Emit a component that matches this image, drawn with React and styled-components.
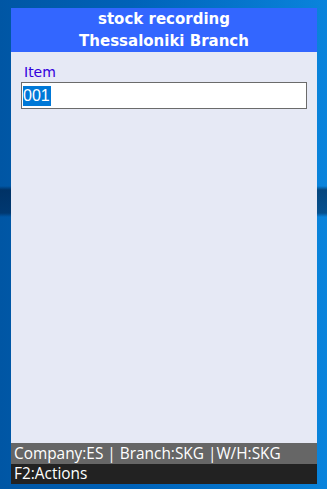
import React from "react";
import styled, { createGlobalStyle } from "styled-components";

const Global = createGlobalStyle`
  html, body { margin: 0; padding: 0; }
  body {
    width: 327px;
    height: 489px;
    overflow: hidden;
    background:
      linear-gradient(to bottom, transparent 186px, rgba(0, 20, 50, 0.55) 190px, rgba(0, 20, 50, 0.45) 213px, transparent 217px),
      linear-gradient(to right, #0056a4 0%, #0062b8 40%, #0a84dc 100%);
  }
`;

const Window = styled.div`
  margin: 8px 10px 0 11px;
  width: 306px;
  height: 476px;
  display: flex;
  flex-direction: column;
  background: #e6e9f5;
`;

const Header = styled.div`
  height: 44px;
  background: #3366ff;
  color: #ffffff;
  font-family: "DejaVu Sans", Verdana, sans-serif;
  font-weight: bold;
  font-size: 15px;
  display: flex;
  flex-direction: column;
  align-items: center;
  justify-content: center;
`;

const HeaderLine = styled.div`
  line-height: 22px;
  white-space: nowrap;
`;

const Body = styled.div`
  flex: 1;
  display: flex;
  flex-direction: column;
  padding: 10px 10px 0 10px;
`;

const Label = styled.div`
  font-family: "DejaVu Sans", Tahoma, sans-serif;
  font-size: 14px;
  line-height: 20px;
  color: #3300dd;
  padding-left: 3px;
`;

const Field = styled.div`
  height: 25px;
  border: 1px solid #6b6b6b;
  background: #ffffff;
  display: flex;
  align-items: center;
  padding-left: 1px;
  font-family: "Liberation Sans", Arial, sans-serif;
  font-size: 16px;
`;

const Selected = styled.span`
  background: #0078d7;
  color: #ffffff;
  line-height: 20px;
  padding: 0 1px 0 0;
`;

const StatusBar = styled.div`
  height: 21px;
  background: #666666;
  color: #ffffff;
  font-family: "Open Sans", "Segoe UI", sans-serif;
  font-size: 15.4px;
  line-height: 21px;
  padding-left: 3px;
  white-space: nowrap;
`;

const ActionBar = styled.div`
  height: 20px;
  background: #222222;
  color: #ffffff;
  font-family: "Open Sans", "Segoe UI", sans-serif;
  font-size: 15.4px;
  line-height: 20px;
  padding-left: 3px;
  white-space: nowrap;
`;

export default function App() {
  return (
    <>
      <Global />
      <Window>
        <Header>
          <HeaderLine>stock recording</HeaderLine>
          <HeaderLine>Thessaloniki Branch</HeaderLine>
        </Header>
        <Body>
          <Label>Item</Label>
          <Field>
            <Selected>001</Selected>
          </Field>
        </Body>
        <StatusBar>Company:ES | Branch:SKG |W/H:SKG</StatusBar>
        <ActionBar>F2:Actions</ActionBar>
      </Window>
    </>
  );
}
